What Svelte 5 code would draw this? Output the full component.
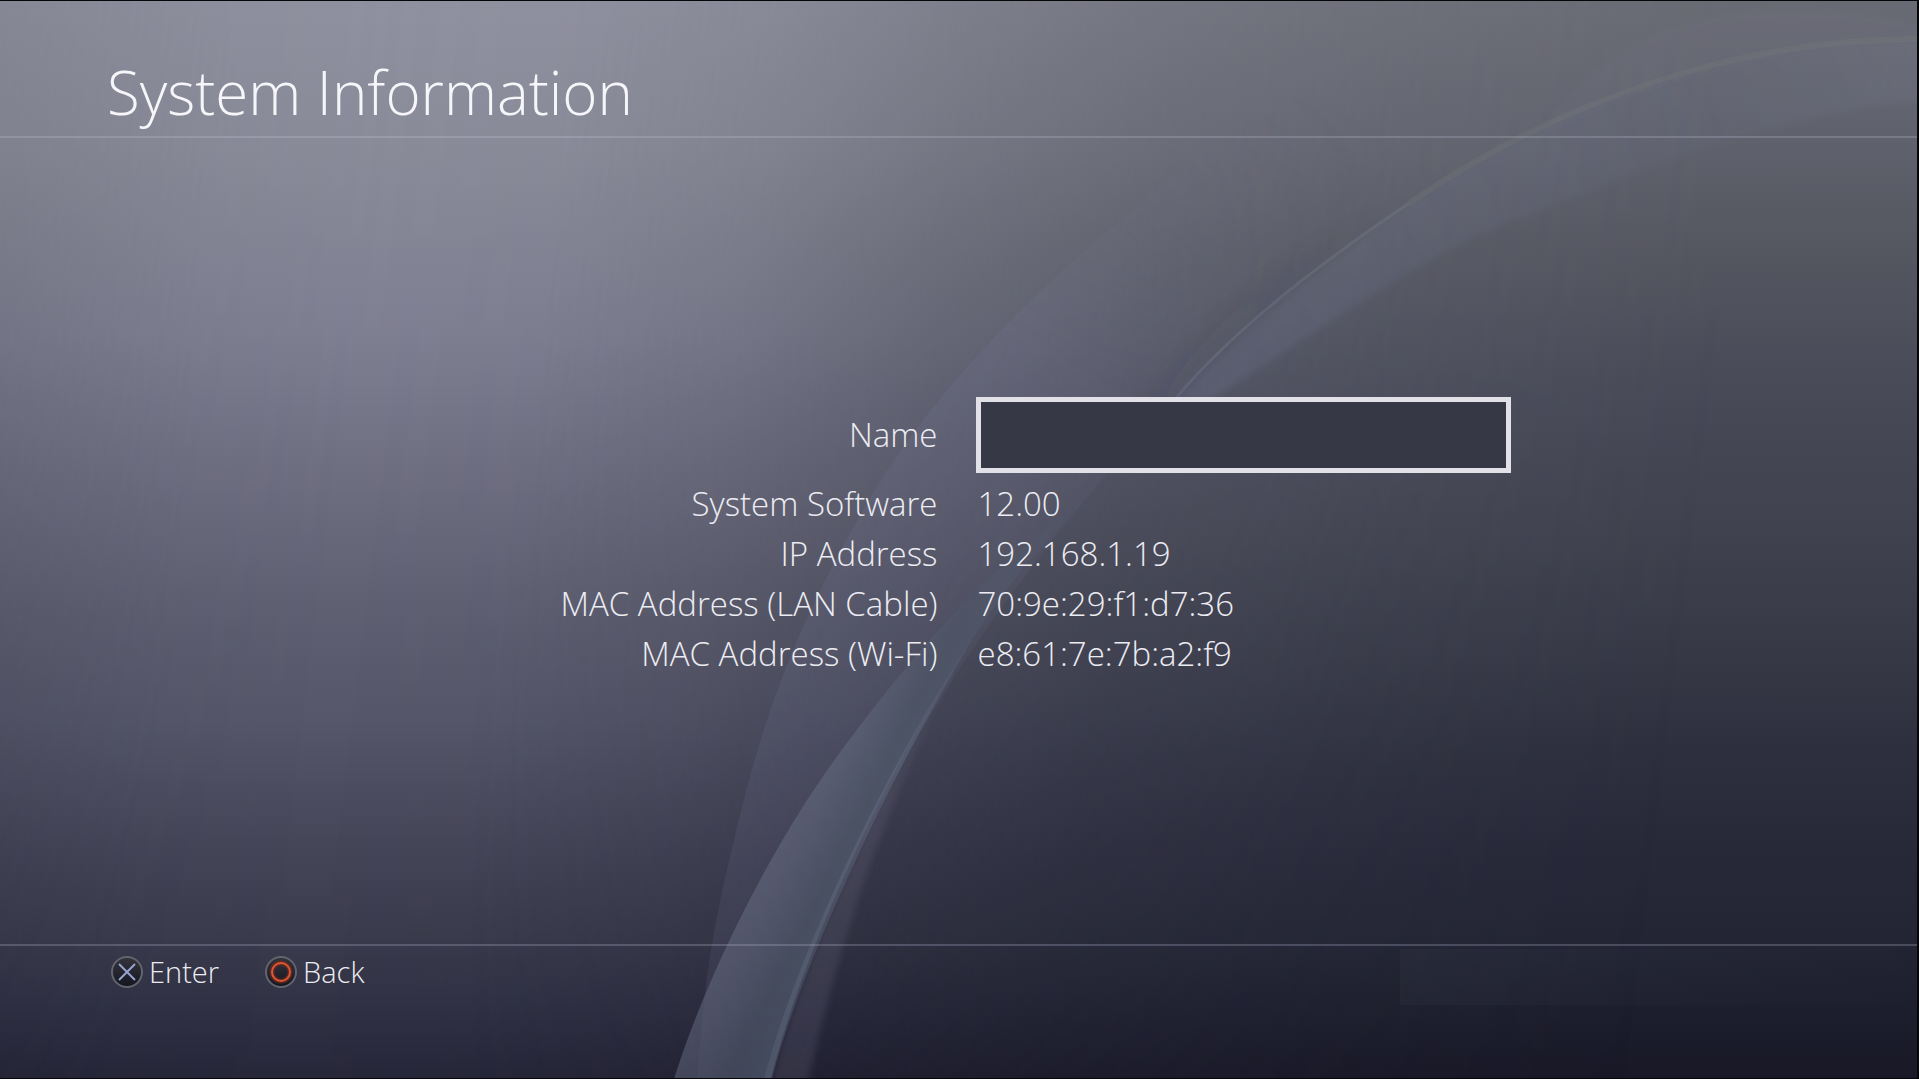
<script>
  let name = $state('');
  const details = [
    ['System Software', '12.00'],
    ['IP Address', '192.168.1.19'],
    ['MAC Address (LAN Cable)', '70:9e:29:f1:d7:36'],
    ['MAC Address (Wi-Fi)', 'e8:61:7e:7b:a2:f9'],
  ];
</script>

<div class="screen">
  <svg class="backdrop" viewBox="0 0 1919 1079" preserveAspectRatio="none" aria-hidden="true">
    <defs>
      <linearGradient id="veil" gradientUnits="userSpaceOnUse" x1="900" y1="400" x2="1180" y2="550">
        <stop offset="0" stop-color="#8484a8" stop-opacity=".15" />
        <stop offset=".5" stop-color="#8484a8" stop-opacity=".11" />
        <stop offset="1" stop-color="#8484a8" stop-opacity="0" />
      </linearGradient>
      <linearGradient id="veilFade" gradientUnits="userSpaceOnUse" x1="1000" y1="330" x2="1200" y2="20">
        <stop offset="0" stop-color="#fff" />
        <stop offset="1" stop-color="#fff" stop-opacity="0" />
      </linearGradient>
      <mask id="veilMask" maskUnits="userSpaceOnUse" x="0" y="0" width="1919" height="1079">
        <rect width="1919" height="1079" fill="url(#veilFade)" />
      </mask>
      <linearGradient id="veilLow" gradientUnits="userSpaceOnUse" x1="0" y1="640" x2="0" y2="1079">
        <stop offset="0" stop-color="#7c7890" stop-opacity="0" />
        <stop offset=".4" stop-color="#7c7890" stop-opacity=".18" />
        <stop offset="1" stop-color="#7c7890" stop-opacity=".2" />
      </linearGradient>
      <linearGradient id="ribbon" gradientUnits="userSpaceOnUse" x1="750" y1="850" x2="850" y2="900">
        <stop offset="0" stop-color="#666a7e" stop-opacity=".75" />
        <stop offset=".35" stop-color="#5f6579" stop-opacity=".75" />
        <stop offset=".75" stop-color="#4e5868" stop-opacity=".8" />
        <stop offset="1" stop-color="#535e70" stop-opacity=".8" />
      </linearGradient>
      <linearGradient id="fadeUp" gradientUnits="userSpaceOnUse" x1="700" y1="1079" x2="1120" y2="460">
        <stop offset="0" stop-color="#fff" stop-opacity=".75" />
        <stop offset=".5" stop-color="#fff" stop-opacity=".95" />
        <stop offset=".7" stop-color="#fff" stop-opacity=".65" />
        <stop offset="1" stop-color="#fff" stop-opacity="0" />
      </linearGradient>
      <mask id="ribbonMask" maskUnits="userSpaceOnUse" x="0" y="0" width="1919" height="1079">
        <rect width="1919" height="1079" fill="url(#fadeUp)" />
      </mask>
      <linearGradient id="upper" gradientUnits="userSpaceOnUse" x1="1180" y1="400" x2="1919" y2="50">
        <stop offset="0" stop-color="#74809c" stop-opacity=".22" />
        <stop offset=".4" stop-color="#74789a" stop-opacity=".15" />
        <stop offset=".7" stop-color="#74789a" stop-opacity=".08" />
        <stop offset="1" stop-color="#80849a" stop-opacity=".18" />
      </linearGradient>
      <linearGradient id="shade" gradientUnits="userSpaceOnUse" x1="1150" y1="420" x2="1430" y2="180">
        <stop offset="0" stop-color="#343746" stop-opacity=".12" />
        <stop offset="1" stop-color="#343746" stop-opacity="0" />
      </linearGradient>
      <filter id="soft" x="-20%" y="-20%" width="140%" height="140%">
        <feGaussianBlur stdDeviation="12" />
      </filter>
      <filter id="soften" x="-20%" y="-20%" width="140%" height="140%">
        <feGaussianBlur stdDeviation="3" />
      </filter>
    </defs>

    <path mask="url(#veilMask)" fill="url(#veil)" d="M698 1079 C704 1000 710 940 735 840 C765 710 800 620 870 500 C940 380 1060 260 1230 135 C1350 50 1560 -5 1700 0 L1919 25 L1919 35 C1640 40 1400 190 1178 397 C1060 520 860 760 772 1079Z" />
    <path filter="url(#soften)" fill="#7c8098" fill-opacity=".08" d="M1540 135 C1580 70 1650 20 1740 12 C1800 6 1870 10 1925 26 L1925 38 C1800 36 1660 75 1540 135Z" />
    <path filter="url(#soft)" fill="url(#shade)" d="M1130 440 C1190 340 1300 240 1440 170 C1350 235 1240 330 1178 397Z" />
    <path filter="url(#soften)" fill="url(#upper)" d="M1110 476 C1170 400 1260 315 1319 273 C1500 120 1720 35 1925 38 L1925 100 C1780 112 1660 165 1500 225 C1390 275 1270 365 1215 397 C1170 430 1140 450 1110 476Z" />
    <path fill="none" stroke="#80847f" stroke-opacity=".2" stroke-width="6" d="M1410 203 C1560 100 1740 38 1919 38" />
    <path fill="none" stroke="#8c96a6" stroke-opacity=".2" stroke-width="3" d="M1178 397 C1230 335 1310 270 1410 203" />
    <path filter="url(#soften)" fill="url(#veilLow)" d="M772 1085 C800 980 870 800 973 640 C915 750 860 860 808 1085Z" />
    <g mask="url(#ribbonMask)">
      <path fill="url(#ribbon)" d="M675 1079 C700 1000 745 900 805 805 C850 735 940 620 1010 560 C1050 525 1090 495 1120 470 C1080 505 1020 565 973 640 C890 765 800 960 772 1079Z" />
      <path fill="#6c778b" fill-opacity=".4" d="M765 1079 C795 965 879 780 973 640 C890 780 804 960 773 1079Z" />
    </g>
  </svg>

  <header>
    <h1>System Information</h1>
  </header>

  <main>
    <div class="row name">
      <label for="system-name">Name</label>
      <input id="system-name" type="text" bind:value={name} autocomplete="off" />
    </div>
    <dl>
      {#each details as [term, value]}
        <div class="row">
          <dt>{term}</dt>
          <dd>{value}</dd>
        </div>
      {/each}
    </dl>
  </main>

  <footer>
    <button type="button">
      <svg viewBox="0 0 32 32" aria-hidden="true">
        <defs>
          <linearGradient id="face" x1="0" y1="0" x2="0" y2="1">
            <stop offset="0" stop-color="#34343c" />
            <stop offset="1" stop-color="#14161f" />
          </linearGradient>
        </defs>
        <circle cx="16" cy="16" r="15" fill="url(#face)" stroke="#62646f" stroke-width="2" />
        <path d="M8 8 24 24 M24 8 8 24" fill="none" stroke="#99a3cf" stroke-width="2" />
      </svg>
      <span>Enter</span>
    </button>
    <button type="button">
      <svg viewBox="0 0 32 32" aria-hidden="true">
        <circle cx="16" cy="16" r="15" fill="url(#face)" stroke="#62646f" stroke-width="2" />
        <circle cx="16" cy="16" r="9" fill="none" stroke="#7a2c20" stroke-opacity=".6" stroke-width="5" />
        <circle cx="16" cy="16" r="9" fill="none" stroke="#e0562f" stroke-width="2" />
      </svg>
      <span>Back</span>
    </button>
    <div class="status"></div>
  </footer>
</div>

<style>
  :global(body) {
    margin: 0;
    background: #05050a;
  }

  .screen {
    position: relative;
    box-sizing: border-box;
    min-height: 100vh;
    display: flex;
    flex-direction: column;
    border: solid #05050a;
    border-width: 1px 2px 1px 0;
    overflow: hidden;
    color: #ececf2;
    font-family: 'Open Sans', 'Noto Sans', sans-serif;
    font-weight: 300;
    background: linear-gradient(180deg, #696b74 0%, #5f616c 13%, #545660 23%, #474957 37%, #3f414e 50%, #363846 61%, #2d2f3e 70%, #272838 79%, #232534 87%, #181827 100%);
  }

  .screen::before {
    content: '';
    position: absolute;
    inset: 0;
    background: linear-gradient(180deg, #9091a0 0%, #8b8c9a 13%, #7e7f91 31%, #6c6c7f 46%, #5e5f71 57%, #555669 67%, #454558 79%, #3a3b4c 87%, #313245 93%, #27273a 100%);
    mask-image: linear-gradient(97deg, rgb(0 0 0 / 0.75) 0%, rgb(0 0 0 / 0.95) 12%, #000 20%, rgb(0 0 0 / 0.97) 28%, rgb(0 0 0 / 0.8) 38%, rgb(0 0 0 / 0.5) 48%, rgb(0 0 0 / 0.28) 58%, rgb(0 0 0 / 0.12) 70%, transparent 86%);
  }

  .backdrop {
    position: absolute;
    inset: 0;
    width: 100%;
    height: 100%;
  }

  header,
  main,
  footer {
    position: relative;
  }

  header {
    padding: 50px 107px 3px;
    border-bottom: 2px solid rgb(200 200 220 / 0.24);
  }

  h1 {
    margin: 0;
    font-size: 60px;
    line-height: 82px;
    font-weight: 300;
    color: #f6f6fa;
  }

  main {
    flex: 1;
    display: flex;
    flex-direction: column;
    justify-content: center;
    gap: 6px;
    padding: 0 2px 6px 0;
    font-size: 33px;
    line-height: 50px;
  }

  .row {
    display: grid;
    grid-template-columns: 1fr 1fr;
    column-gap: 36px;
    align-items: center;
  }

  label,
  dt {
    padding-right: 2px;
    text-align: right;
  }

  dl,
  dd {
    margin: 0;
  }

  dd {
    padding-left: 2px;
  }

  input {
    box-sizing: border-box;
    width: 57%;
    height: 76px;
    padding: 0 16px;
    border: 5px solid #e2e1e7;
    border-radius: 0;
    outline: none;
    background: #373845;
    color: inherit;
    font: inherit;
  }

  footer {
    display: flex;
    align-items: flex-start;
    gap: 46px;
    min-height: 132px;
    padding-left: 111px;
    border-top: 2px solid rgb(190 190 215 / 0.26);
  }

  button {
    display: flex;
    align-items: center;
    gap: 6px;
    margin-top: 4px;
    padding: 0;
    border: 0;
    background: none;
    color: inherit;
    font: inherit;
    font-size: 29px;
    line-height: 44px;
    cursor: pointer;
  }

  button svg {
    width: 32px;
    height: 32px;
  }

  .status {
    width: 28.6%;
    flex: none;
    height: 56px;
    margin: 3px 0 0 auto;
    background: linear-gradient(90deg, rgb(90 100 115 / 0.08), rgb(90 100 115 / 0));
  }
</style>
